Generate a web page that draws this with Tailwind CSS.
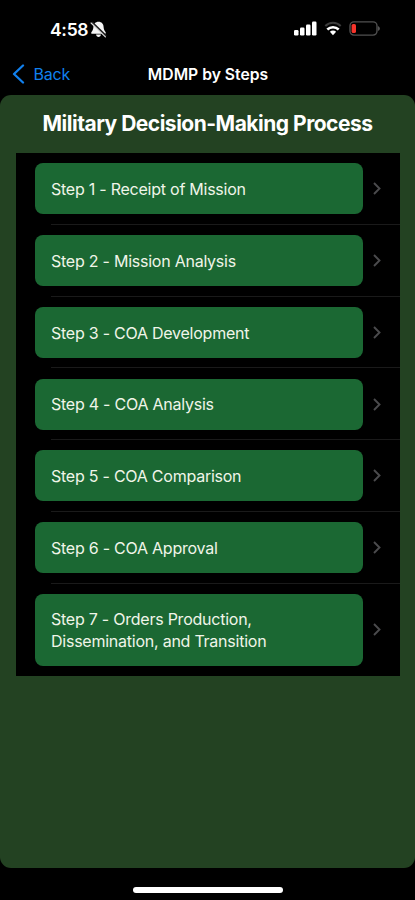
<!DOCTYPE html>
<html lang="en">
  <head>
    <meta charset="UTF-8" />
    <meta name="viewport" content="width=device-width, initial-scale=1.0" />
    <title>MDMP by Steps</title>
    <!-- Tailwind CSS -->
    <script src="https://cdn.jsdelivr.net/npm/@tailwindcss/browser@4"></script>
  </head>

  <body
    class="flex flex-col w-[415px] h-[900px] overflow-hidden bg-black font-['Inter','Liberation_Sans',sans-serif] text-white"
  >
    <!-- Status bar -->
    <div class="flex justify-between h-[53px] pt-[17px] pl-[50px] pr-[35px]">
      <div class="flex items-center h-6">
        <span class="w-[40px] pt-0.5 text-[17.500px] font-semibold tracking-[-0.300px] whitespace-nowrap">4:58</span>
        <svg class="w-[17px] h-[17px]" viewBox="0 0 16 16" fill="none">
          <path d="M8 .8c-2.900 0-4.700 2-4.800 4.900C3.100 8 2.500 9 1.400 10.300c-.6.900-.2 1.700.6 1.700h12c.8 0 1.200-.8.600-1.700C13.500 9 12.900 8 12.800 5.700 12.700 2.800 10.900.8 8 .8z" fill="#f5f5f5" />
          <path d="M5.700 12.800h4.600c-.2 1.400-1.100 2.200-2.300 2.200s-2.100-.8-2.300-2.200z" fill="#f5f5f5" />
          <path d="M1.800 1.200l13.400 13" stroke="#222" stroke-width="1.900" />
          <path d="M1 1.900l13.500 13" stroke="#ddd" stroke-width="1.100" stroke-linecap="round" />
        </svg>
      </div>
      <div class="flex items-center h-6 -mt-px">
        <!-- Signal -->
        <svg class="w-[23px] h-[15px]" viewBox="0 0 23 15" fill="#fff">
          <rect x="0" y="9" width="4.500" height="5.500" rx="1.200" />
          <rect x="6" y="6.500" width="4.500" height="8" rx="1.200" />
          <rect x="12" y="3.500" width="4.500" height="11" rx="1.200" />
          <rect x="18" y="0.500" width="4.500" height="14" rx="1.200" />
        </svg>
        <!-- Wi-Fi -->
        <svg class="ml-[7px] w-[18px] h-[15px]" viewBox="0 0 18 15" fill="none">
          <path d="M1.300 5C5.600.7 12.400.7 16.700 5" stroke="#3c3c3c" stroke-width="2" />
          <path d="M3.300 8.500c3.200-3 8.200-3 11.400 0" stroke="#fff" stroke-width="2.600" />
          <path d="M9 9.600c-1.200 0-2.300.4-3.100 1.100L9 14.300l3.100-3.600C11.300 10 10.200 9.600 9 9.600z" fill="#fff" />
        </svg>
        <!-- Battery -->
        <svg class="ml-[7px] w-[31px] h-[15px]" viewBox="0 0 31 15" fill="none">
          <rect x="1" y="0.900" width="27" height="13.200" rx="4" stroke="#505050" stroke-width="1.400" />
          <rect x="2.600" y="3" width="4.400" height="9" rx="1.600" fill="#f5342b" />
          <path d="M29 5.200c1.200.4 1.900 1.200 1.900 2.300s-.7 1.900-1.900 2.300z" fill="#565656" />
        </svg>
      </div>
    </div>

    <!-- Navigation bar -->
    <nav class="grid grid-cols-[120px_1fr_120px] items-center h-[42px] shrink-0">
      <a class="flex items-center pl-[12px] text-[#1180ee]">
        <svg class="w-[13px] h-[20px]" viewBox="0 0 13 20" fill="none" stroke="currentColor" stroke-width="2.300" stroke-linecap="round" stroke-linejoin="round">
          <path d="M11 1.500L2 10l9 8.500" />
        </svg>
        <span class="ml-[8.500px] text-[16px] tracking-[-0.200px]">Back</span>
      </a>
      <h1 class="pl-px pt-px text-center text-[15.700px] font-semibold whitespace-nowrap">MDMP by Steps</h1>
    </nav>

    <!-- Content -->
    <main class="h-[773px] shrink-0 rounded-[11px] bg-[#234222] px-4">
      <h2 class="h-[58px] pt-[14px] text-center text-[21px] leading-[30px] font-bold tracking-[-0.500px] whitespace-nowrap">
        Military Decision-Making Process
      </h2>

      <ul class="w-[383.500px] bg-black text-[16px] leading-[21.500px] tracking-[-0.240px] text-[#f0f5e9]">
        <li class="flex items-center h-[71.750px] pl-[19px] bg-[linear-gradient(#1a1a1a,#1a1a1a)] bg-[length:349px_1px] bg-right-bottom bg-no-repeat">
          <div class="flex items-center w-[328px] h-[51px] rounded-lg bg-[#1b6833] pl-[16px] pt-0.5">Step 1 - Receipt of Mission</div>
          <svg class="ml-[9.500px] w-[8px] h-[13px]" viewBox="0 0 8 13" fill="none" stroke="#4b4b4d" stroke-width="1.900"><path d="M1 1l5.500 5.500L1 12" /></svg>
        </li>
        <li class="flex items-center h-[71.750px] pl-[19px] bg-[linear-gradient(#1a1a1a,#1a1a1a)] bg-[length:349px_1px] bg-right-bottom bg-no-repeat">
          <div class="flex items-center w-[328px] h-[51px] rounded-lg bg-[#1b6833] pl-[16px] pt-0.5">Step 2 - Mission Analysis</div>
          <svg class="ml-[9.500px] w-[8px] h-[13px]" viewBox="0 0 8 13" fill="none" stroke="#4b4b4d" stroke-width="1.900"><path d="M1 1l5.500 5.500L1 12" /></svg>
        </li>
        <li class="flex items-center h-[71.750px] pl-[19px] bg-[linear-gradient(#1a1a1a,#1a1a1a)] bg-[length:349px_1px] bg-right-bottom bg-no-repeat">
          <div class="flex items-center w-[328px] h-[51px] rounded-lg bg-[#1b6833] pl-[16px] pt-0.5">Step 3 - COA Development</div>
          <svg class="ml-[9.500px] w-[8px] h-[13px]" viewBox="0 0 8 13" fill="none" stroke="#4b4b4d" stroke-width="1.900"><path d="M1 1l5.500 5.500L1 12" /></svg>
        </li>
        <li class="flex items-center h-[71.750px] pl-[19px] bg-[linear-gradient(#1a1a1a,#1a1a1a)] bg-[length:349px_1px] bg-right-bottom bg-no-repeat">
          <div class="flex items-center w-[328px] h-[51px] rounded-lg bg-[#1b6833] pl-[16px] pt-0.5">Step 4 - COA Analysis</div>
          <svg class="ml-[9.500px] w-[8px] h-[13px]" viewBox="0 0 8 13" fill="none" stroke="#4b4b4d" stroke-width="1.900"><path d="M1 1l5.500 5.500L1 12" /></svg>
        </li>
        <li class="flex items-center h-[71.750px] pl-[19px] bg-[linear-gradient(#1a1a1a,#1a1a1a)] bg-[length:349px_1px] bg-right-bottom bg-no-repeat">
          <div class="flex items-center w-[328px] h-[51px] rounded-lg bg-[#1b6833] pl-[16px] pt-0.5">Step 5 - COA Comparison</div>
          <svg class="ml-[9.500px] w-[8px] h-[13px]" viewBox="0 0 8 13" fill="none" stroke="#4b4b4d" stroke-width="1.900"><path d="M1 1l5.500 5.500L1 12" /></svg>
        </li>
        <li class="flex items-center h-[71.750px] pl-[19px] bg-[linear-gradient(#1a1a1a,#1a1a1a)] bg-[length:349px_1px] bg-right-bottom bg-no-repeat">
          <div class="flex items-center w-[328px] h-[51px] rounded-lg bg-[#1b6833] pl-[16px] pt-0.5">Step 6 - COA Approval</div>
          <svg class="ml-[9.500px] w-[8px] h-[13px]" viewBox="0 0 8 13" fill="none" stroke="#4b4b4d" stroke-width="1.900"><path d="M1 1l5.500 5.500L1 12" /></svg>
        </li>
        <li class="flex items-center h-[92.500px] pl-[19px]">
          <div class="flex items-center w-[328px] h-[72px] rounded-lg bg-[#1b6833] pl-[16px] pt-0.5">
            <p>Step 7 - Orders Production,<br />Dissemination, and Transition</p>
          </div>
          <svg class="ml-[9.500px] w-[8px] h-[13px]" viewBox="0 0 8 13" fill="none" stroke="#4b4b4d" stroke-width="1.900"><path d="M1 1l5.500 5.500L1 12" /></svg>
        </li>
      </ul>
    </main>

    <!-- Home indicator -->
    <div class="mt-[19px] mx-auto w-[150px] h-[6px] shrink-0 rounded-full bg-white"></div>
  </body>
</html>
